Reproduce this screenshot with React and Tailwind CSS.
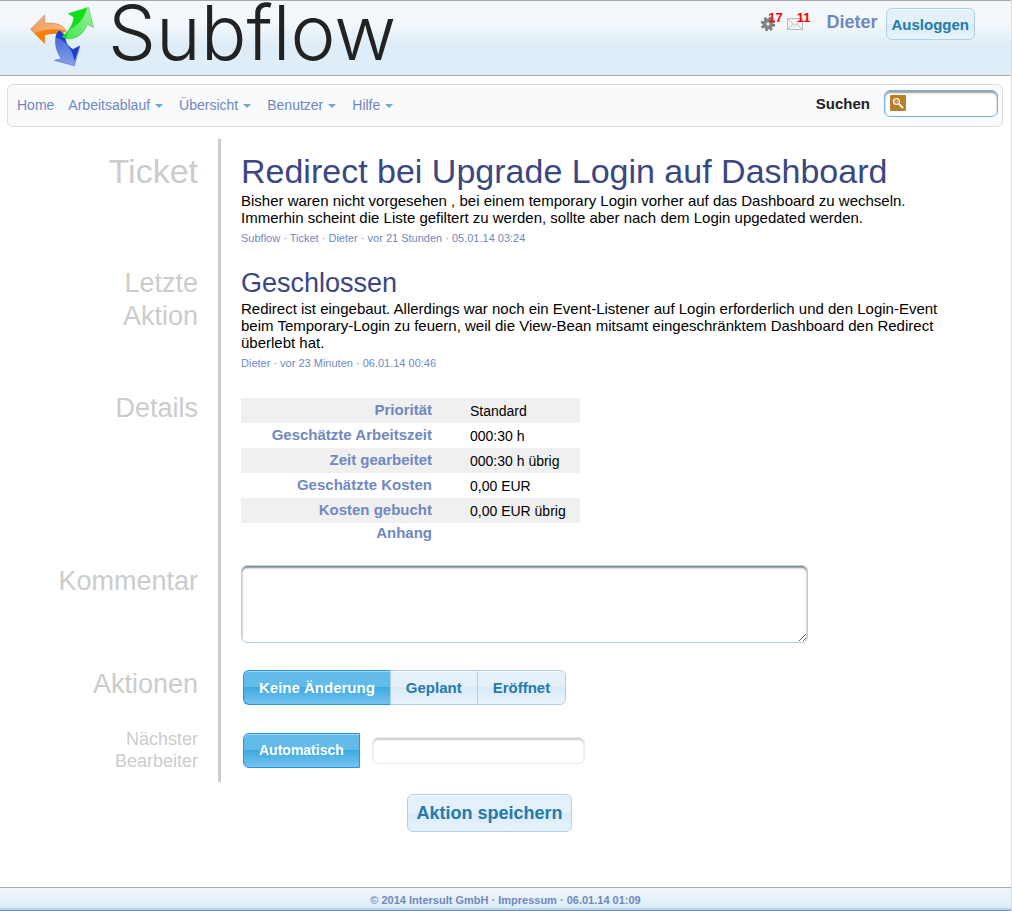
import React, { useState } from 'react';

const menus = ['Arbeitsablauf', 'Übersicht', 'Benutzer', 'Hilfe'];

const details = [
  { label: 'Priorität', value: 'Standard' },
  { label: 'Geschätzte Arbeitszeit', value: '000:30 h' },
  { label: 'Zeit gearbeitet', value: '000:30 h übrig' },
  { label: 'Geschätzte Kosten', value: '0,00 EUR' },
  { label: 'Kosten gebucht', value: '0,00 EUR übrig' },
];

const actions = ['Keine Änderung', 'Geplant', 'Eröffnet'];

const defaultButton =
  'border-[#aed0ea] bg-linear-to-b from-[#e4f1fb] from-50% via-[#d7ebf9] via-50% to-[#e9f4fc] text-[#2779aa] shadow-[inset_0_1px_0_#f4fafe]';
const activeButton =
  'border-[#2694e8] bg-linear-to-b from-[#62bbe9] from-50% via-[#3baae3] via-50% to-[#74c3ec] text-white shadow-[inset_0_1px_0_#a5d8f3]';

const Logo = () => (
  <svg viewBox="84 15 204 190" className="h-[63px] w-[68px] shrink-0" aria-hidden="true">
    <defs>
      <linearGradient id="orange" x1="0" y1="0" x2="1" y2="0">
        <stop offset="0" stopColor="#f0a058" />
        <stop offset="1" stopColor="#f3b88a" />
      </linearGradient>
      <linearGradient id="green" x1="0" y1="1" x2="1" y2="0">
        <stop offset="0" stopColor="#3fe545" />
        <stop offset="1" stopColor="#9cf0a0" />
      </linearGradient>
      <linearGradient id="blue" x1="0" y1="0" x2="0" y2="1">
        <stop offset="0" stopColor="#3a5fd0" />
        <stop offset="1" stopColor="#86a2ea" />
      </linearGradient>
    </defs>
    <path d="M91 88 134 45V70C165 67 190 74 199 94L180 104C168 98 150 102 134 105V131Z" fill="url(#orange)" stroke="#c98a58" strokeWidth="2" />
    <path d="M103 100C130 88 165 85 198 92L180 104C168 98 150 102 134 105V131Z" fill="#f58108" />
    <path d="M178 92C162 104 161 145 184 177L163 182 223 198 240 138 219 149C201 140 194 122 196 108Z" fill="url(#blue)" stroke="#5570c8" strokeWidth="2" />
    <path d="M178 92C172 99 168 103 167 112C195 120 216 145 224 184L239 139 219 149C201 140 194 122 196 108Z" fill="#1c3fd2" />
    <path d="M187 110C206 95 219 76 222 52L205 41 266 22 281 83 262 73C254 100 230 120 200 117Z" fill="url(#green)" stroke="#55c85c" strokeWidth="2" />
    <path d="M187 110C206 95 219 76 222 52L205 41 262 24C248 64 232 78 210 88C202 95 200 105 200 117Z" fill="#12de18" />
  </svg>
);

const GearIcon = () => (
  <svg viewBox="0 0 16 16" className="size-4" aria-hidden="true">
    <circle cx="8" cy="8" r="6" fill="none" stroke="#777" strokeWidth="2.4" strokeDasharray="2.6 2.11" />
    <circle cx="8" cy="8" r="3.9" fill="#ddd" stroke="#808080" strokeWidth="3" />
    <circle cx="8" cy="8" r="2" fill="#f4f4f4" stroke="#666" strokeWidth="0.8" />
  </svg>
);

const MailIcon = () => (
  <svg viewBox="0 0 16 16" className="size-4" aria-hidden="true">
    <rect x="0.5" y="2.5" width="15" height="11" fill="#f3f3f3" stroke="#bbb" />
    <path d="M1 3 8 9.5 15 3M1 13 6 8M15 13 10 8" fill="none" stroke="#c4c4c4" />
  </svg>
);

const SearchIcon = () => (
  <svg viewBox="0 0 16 16" className="pointer-events-none absolute left-[6px] top-[5px] size-4" aria-hidden="true">
    <rect width="16" height="16" rx="1" fill="#b9802b" />
    <circle cx="6.5" cy="6.5" r="3" fill="#c99a50" stroke="#fff" strokeWidth="1.2" />
    <path d="M9 9 13 13" stroke="#fff" strokeWidth="1.8" />
  </svg>
);

const Row = ({ label, labelClass, className, children }) => (
  <section className="flex">
    <div className={`w-[218px] shrink-0 pr-5 text-right text-[#ccc] ${className}`}>
      <div className={labelClass}>{label}</div>
    </div>
    <div className={`min-w-0 flex-1 border-l-3 border-[#ccc] pl-5 pr-5 ${className}`}>{children}</div>
  </section>
);

const App = () => {
  const [search, setSearch] = useState('');
  const [comment, setComment] = useState('');
  const [action, setAction] = useState('Keine Änderung');
  const [assignee, setAssignee] = useState('');

  return (
    <div className="flex min-h-screen flex-col border-r border-[#ddd] bg-white font-['Liberation_Sans',Arial,sans-serif] text-[14px] leading-[17px] text-black">
      <header className="flex h-[76px] items-start justify-between border-y border-[#aaa] bg-linear-to-b from-[#f3f8fc] from-30% to-[#deedf7] to-60% pl-7 pr-9">
        <div className="flex items-start">
          <div className="pt-1">
            <Logo />
          </div>
          <span className="pl-3 font-['Inter',sans-serif] text-[76px] font-light leading-[62px] text-[#222]">Subflow</span>
        </div>
        <div className="flex items-center pt-[7px]">
          <a href="#jobs" className="flex items-start text-[13px] font-bold leading-4 text-[#f00]" aria-label="17 Aufgaben">
            <GearIcon />
            <span className="relative -ml-2 -mt-[6px]">17</span>
          </a>
          <a href="#mails" className="ml-1 flex items-start text-[13px] font-bold leading-4 text-[#f00]" aria-label="11 Nachrichten">
            <MailIcon />
            <span className="relative -ml-[6px] -mt-[6px]">11</span>
          </a>
          <a href="#profile" className="ml-4 pb-1 text-[18px] font-bold leading-6 text-[#7088c0]">Dieter</a>
          <button type="button" className={`ml-2 h-8 rounded-md border px-[5px] text-[15px] font-bold ${defaultButton}`}>
            Ausloggen
          </button>
        </div>
      </header>

      <nav className="ml-[7px] mr-2 mt-2 flex h-[43px] items-center justify-between rounded-md border border-[#ddd] bg-[#f9fafc] pl-[9px] pr-1">
        <div className="flex gap-[14px] text-[#7088c0]">
          <a href="#home">Home</a>
          {menus.map((menu) => (
            <a key={menu} href={`#${menu}`} className="flex items-center gap-[5px] pr-[2px]">
              {menu}
              <svg viewBox="0 0 8 4" className="h-1 w-2" aria-hidden="true">
                <path d="M0 0H8L4 4Z" fill="#72a7cf" />
              </svg>
            </a>
          ))}
        </div>
        <div className="flex items-center pb-1">
          <label htmlFor="search" className="pr-[14px] text-[15px] font-bold text-[#222]">Suchen</label>
          <div className="relative">
            <input
              id="search"
              type="text"
              value={search}
              onChange={(e) => setSearch(e.target.value)}
              className="block h-[27px] w-[114px] rounded-md border border-[#74b2e2] bg-white pl-6 pr-1 shadow-[inset_0_2px_2px_#999] outline-none"
            />
            <SearchIcon />
          </div>
        </div>
      </nav>

      <main className="pb-12 pt-3">
        <Row label="Ticket" labelClass="text-[34px] leading-[42px]" className="pt-[11px]">
          <h1 className="text-[34px] leading-[42px] text-[#3a4781]">Redirect bei Upgrade Login auf Dashboard</h1>
          <p className="max-w-[710px] text-[15px]">
            Bisher waren nicht vorgesehen , bei einem temporary Login vorher auf das Dashboard zu wechseln.<br />
            Immerhin scheint die Liste gefiltert zu werden, sollte aber nach dem Login upgedated werden.
          </p>
          <p className="mt-1 text-[11px] leading-4 text-[#7088c0]">
            <a href="#subflow">Subflow</a> · <a href="#ticket">Ticket</a> · <a href="#dieter">Dieter</a> · vor 21 Stunden · 05.01.14 03:24
          </p>
        </Row>

        <Row label={<>Letzte<br />Aktion</>} labelClass="text-[27px] leading-[33px]" className="pt-[21px]">
          <h2 className="text-[27px] leading-[33px] text-[#3a4781]">Geschlossen</h2>
          <p className="max-w-[710px] text-[15px]">
            Redirect ist eingebaut. Allerdings war noch ein Event-Listener auf Login erforderlich und den Login-Event beim
            Temporary-Login zu feuern, weil die View-Bean mitsamt eingeschränktem Dashboard den Redirect überlebt hat.
          </p>
          <p className="mt-1 text-[11px] leading-4 text-[#7088c0]">
            <a href="#dieter">Dieter</a> · vor 23 Minuten · 06.01.14 00:46
          </p>
        </Row>

        <Row label="Details" labelClass="text-[27px] leading-[33px]" className="pt-[21px]">
          <table className="mt-[6px] w-[339px]">
            <tbody>
              {details.map((item) => (
                <tr key={item.label} className="h-[25px] odd:bg-[#f0f0f0]">
                  <th scope="row" className="w-[229px] pb-[2px] pr-[38px] text-right text-[15px] font-bold text-[#7088c0]">{item.label}</th>
                  <td className="pt-[2px]">{item.value}</td>
                </tr>
              ))}
              <tr>
                <th scope="row" className="pb-[1px] pr-[38px] pt-[1px] text-right text-[15px] font-bold text-[#7088c0]">Anhang</th>
                <td></td>
              </tr>
            </tbody>
          </table>
        </Row>

        <Row label={<label htmlFor="comment">Kommentar</label>} labelClass="text-[27px] leading-[33px]" className="pt-[23px]">
          <textarea
            id="comment"
            value={comment}
            onChange={(e) => setComment(e.target.value)}
            className="block h-[78px] w-full max-w-[567px] rounded-md border border-[#aed0ea] bg-white p-1 shadow-[inset_0_2px_2px_#888] outline-none"
          />
        </Row>

        <Row label="Aktionen" labelClass="text-[27px] leading-[33px]" className="pt-[25px]">
          <div className="ml-[2px] mt-[2px] flex text-[15px] font-bold">
            {actions.map((name) => (
              <button
                key={name}
                type="button"
                onClick={() => setAction(name)}
                className={`h-[35px] border border-r-0 px-[15px] first:rounded-l-md last:rounded-r-md last:border-r ${name === action ? activeButton : defaultButton}`}
              >
                {name}
              </button>
            ))}
          </div>
        </Row>

        <Row label={<label htmlFor="assignee">Nächster<br />Bearbeiter</label>} labelClass="text-[18px] leading-[22px]" className="pb-[10px] pt-[23px]">
          <div className="ml-[2px] mt-[5px] flex items-center gap-3">
            <button type="button" className={`h-[35px] rounded-l-md border px-[15px] text-[14px] font-bold ${activeButton}`}>
              Automatisch
            </button>
            <input
              id="assignee"
              type="text"
              value={assignee}
              onChange={(e) => setAssignee(e.target.value)}
              className="h-[27px] w-[213px] rounded-md border border-[#deedf7] bg-white px-2 shadow-[inset_0_2px_2px_#ccc] outline-none"
            />
          </div>
        </Row>

        <div className="flex justify-center pr-8 pt-3">
          <button type="button" className={`h-[38px] rounded-md border px-2 text-[18px] font-bold ${defaultButton}`}>
            Aktion speichern
          </button>
        </div>
      </main>

      <footer className="mt-auto border-b border-t border-b-[#6f8fae] border-t-[#aaa] bg-[#deedf7]">
        <p className="border-b-2 border-[#b5d5f0] bg-linear-to-b from-[#eef6fb] to-[#deedf7] pt-1 text-center text-[11px] font-bold leading-4 text-[#7088c0]">
          © 2014 Intersult GmbH · <a href="#impressum">Impressum</a> · 06.01.14 01:09
        </p>
      </footer>
    </div>
  );
};

export default App;
